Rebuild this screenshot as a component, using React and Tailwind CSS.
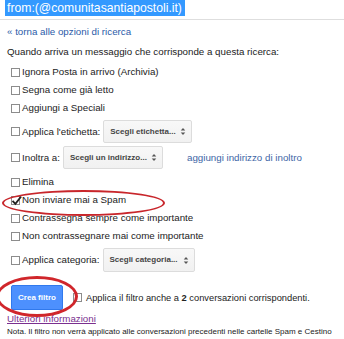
import React from 'react';

const Box = ({ checked }) => (
  <span className="relative block h-[9px] w-[9px] shrink-0 border border-[#8c8c8c] bg-white">
    {checked && (
      <svg viewBox="0 0 10 10" className="absolute left-[-1px] top-[-2px] h-[11px] w-[11px]">
        <path d="M1.4 5.3 L4 8 L9.2 1.4" fill="none" stroke="#222" strokeWidth="1.7" />
      </svg>
    )}
  </span>
);

const Arrows = () => (
  <svg viewBox="0 0 6 10" className="h-[9px] w-[6px]">
    <path d="M0.5 4 L3 1 L5.5 4 Z" fill="#555" />
    <path d="M0.5 6 L3 9 L5.5 6 Z" fill="#555" />
  </svg>
);

const Select = ({ label, className }) => (
  <div
    className={`flex items-center justify-between rounded-[2px] border border-[#dcdcdc] bg-gradient-to-b from-[#f8f8f8] to-[#f1f1f1] pl-[6px] pr-[5px] text-[8px] font-bold text-[#444] ${className}`}
  >
    <span>{label}</span>
    <Arrows />
  </div>
);

const Row = ({ label, checked }) => (
  <div className="flex h-[18px] items-center pl-[11px]">
    <Box checked={checked} />
    <span className="ml-[2px]">{label}</span>
  </div>
);

export default function App() {
  return (
    <div className="relative h-[339px] w-[344px] overflow-hidden bg-white font-['Liberation_Sans',Arial,sans-serif] text-[9.75px] leading-[12px] text-[#222]">
      {/* search query */}
      <div className="flex h-[16px] items-center">
        <span className="ml-[5px] flex h-[16px] w-[180px] items-center bg-[#3399ff] pl-[2px] text-[12.2px] text-white">
          from:(@comunitasantiapostoli.it)
        </span>
      </div>
      <div className="mt-[3px] border-t border-[#dedede]" />

      <div className="mt-[6px] pl-[7px] text-[#2b5ba8]">« torna alle opzioni di ricerca</div>
      <div className="mt-[8px] pl-[7px]">Quando arriva un messaggio che corrisponde a questa ricerca:</div>

      <div className="mt-[5px]">
        <Row label="Ignora Posta in arrivo (Archivia)" />
        <Row label="Segna come già letto" />
        <Row label="Aggiungi a Speciali" />
      </div>

      <div className="mt-[3px] flex h-[23px] items-center pl-[11px]">
        <Box />
        <span className="ml-[2px]">Applica l'etichetta:</span>
        <Select label="Scegli etichetta..." className="ml-[3px] h-[23px] w-[89px]" />
      </div>

      <div className="mt-[3px] flex h-[23px] items-center pl-[11px]">
        <Box />
        <span className="ml-[2px]">Inoltra a:</span>
        <Select label="Scegli un indirizzo..." className="ml-[3px] h-[23px] w-[100px]" />
        <span className="ml-[24px] text-[#3e66a6]">aggiungi indirizzo di inoltro</span>
      </div>

      <div className="mt-[4px]">
        <Row label="Elimina" />
        <Row label="Non inviare mai a Spam" checked />
        <Row label="Contrassegna sempre come importante" />
        <Row label="Non contrassegnare mai come importante" />
      </div>

      <div className="mt-[3px] flex h-[24px] items-center pl-[11px]">
        <Box />
        <span className="ml-[2px]">Applica categoria:</span>
        <Select label="Scegli categoria..." className="ml-[3px] h-[24px] w-[92px]" />
      </div>

      <div className="mt-[13px] flex h-[25px] items-center pl-[11px]">
        <button className="flex h-[25px] w-[52px] items-center justify-center rounded-[2px] border border-[#3079ed] bg-[#4d90fe] text-[8px] font-bold text-white">
          Crea filtro
        </button>
        <span className="ml-[10px]">
          <Box />
        </span>
        <span className="ml-[4px] text-[9.3px]">
          Applica il filtro anche a <b>2</b> conversazioni corrispondenti.
        </span>
      </div>

      <div className="mt-[3px] pl-[7px] text-[#7a2f8f] underline">Ulteriori informazioni</div>
      <div className="mt-[2px] whitespace-nowrap pl-[7px] text-[8px] leading-[9px]">
        Nota. Il filtro non verrà applicato alle conversazioni precedenti nelle cartelle Spam e Cestino
      </div>

      {/* red annotation marks */}
      <div className="absolute left-[2px] top-[190px] h-[26px] w-[163px] rounded-[50%] border-2 border-[#c8262b]" />
      <div className="absolute left-[-4px] top-[276px] h-[41px] w-[82px] rounded-[50%] border-[3px] border-[#d0262b]" />
    </div>
  );
}
